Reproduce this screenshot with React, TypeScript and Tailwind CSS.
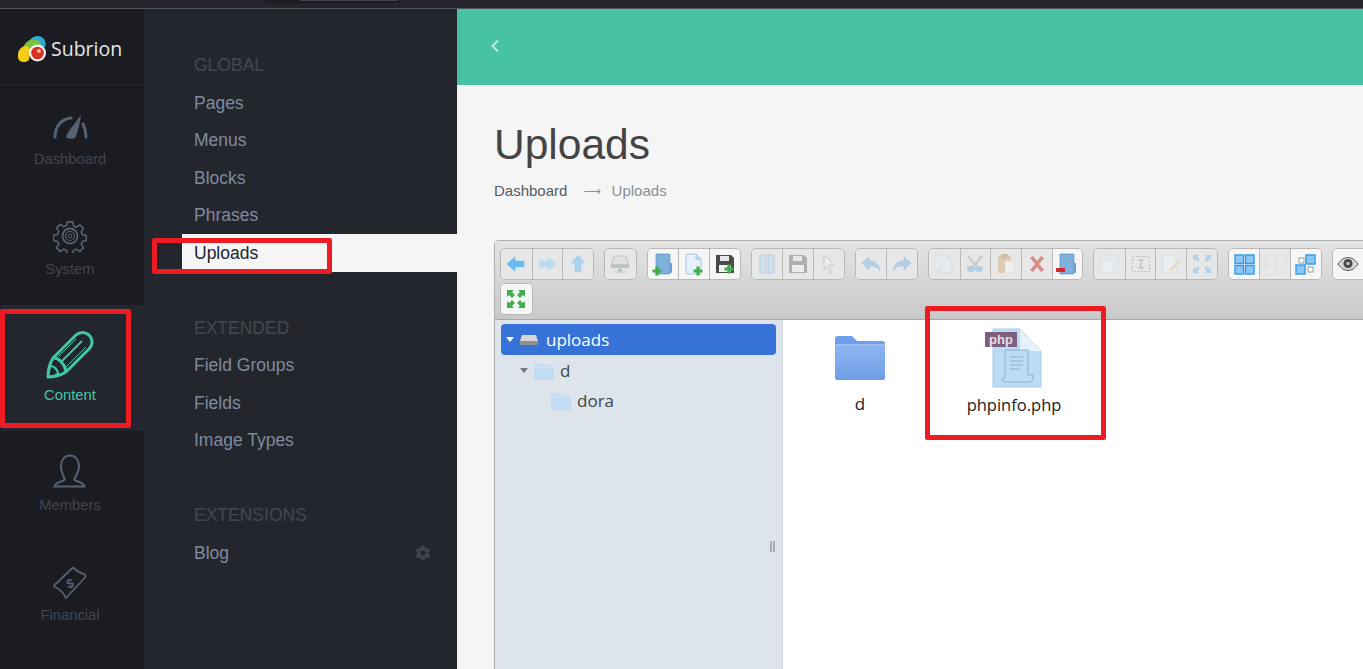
import React from 'react';

const sans = { fontFamily: '"Liberation Sans", Arial, sans-serif' };

const BLUE = '#68bbf0';

const Arrow = ({ rot = 0, fill = BLUE }: { rot?: number; fill?: string }) => (
  <svg width="20" height="20" viewBox="0 0 20 20" style={{ transform: `rotate(${rot}deg)` }}>
    <path d="M1 10 L9 3 V7 H18 V13 H9 V17 Z" fill={fill} stroke={fill} strokeWidth="0.6" />
  </svg>
);

const Plus = ({ x, y, fill = '#3fae4a' }: { x: number; y: number; fill?: string }) => (
  <path d={`M${x - 1.6} ${y - 4.5}h3.2v2.9h2.9v3.2h-2.9v2.9h-3.2v-2.9h-2.9v-3.2h2.9z`} fill={fill} />
);

const Drive = () => (
  <svg width="22" height="22" viewBox="0 0 22 22">
    <path d="M5 3h12l3 9H2z" fill="#dcdcdc" stroke="#9a9a9a" strokeWidth="0.7" />
    <rect x="2" y="11" width="18" height="4" rx="1" fill="#a9a9a9" />
    <path d="M11 15v3M5 19h12" stroke="#a4a4a4" strokeWidth="1" />
    <path d="M8 16h6l-3 3.5z" fill="#6cc06c" />
  </svg>
);

const FolderOpen = ({ badge }: { badge?: 'plus' | 'minus' }) => (
  <svg width="22" height="24" viewBox="0 0 22 24">
    <path d="M4 2h13a1 1 0 0 1 1 1v18a1 1 0 0 1-1 1H4z" fill="#7fb0dc" stroke="#5b92c4" strokeWidth="0.7" />
    <path d="M18 11h2v9a1 1 0 0 1-1 1h-1z" fill="#6a9fd0" />
    {badge === 'plus' && <Plus x={5} y={19} />}
    {badge === 'minus' && <rect x="0" y="16" width="9" height="4" fill="#d22a2a" />}
  </svg>
);

const FileNew = () => (
  <svg width="22" height="24" viewBox="0 0 22 24">
    <path d="M3 2h10l5 5v15H3z" fill="#e4f0fa" stroke="#9bbedb" strokeWidth="0.8" />
    <path d="M13 2v5h5" fill="#c5dcef" stroke="#9bbedb" strokeWidth="0.8" />
    <Plus x={15} y={19} />
  </svg>
);

const Save = ({ dark }: { dark?: boolean }) => (
  <svg width="20" height="20" viewBox="0 0 20 20">
    <path d="M1 1h15l3 3v15H1z" fill={dark ? '#4a4a4a' : '#8b8b8b'} />
    <rect x="5" y="2" width="9" height="5" fill="#e8e8e8" />
    <rect x="4" y="11" width="12" height="7" fill="#f2f2f2" />
    {dark && <Plus x={14} y={15} />}
  </svg>
);

const Book = () => (
  <svg width="20" height="22" viewBox="0 0 20 22">
    <path d="M3 2h6v18H3zM11 2h6v18h-6z" fill="#c4dcf0" stroke="#8fb6d6" strokeWidth="0.8" />
  </svg>
);

const Pointer = () => (
  <svg width="18" height="20" viewBox="0 0 18 20">
    <path d="M4 1l10 10h-5l3 7-2 1-3-7-3 3z" fill="#f2f2f2" stroke="#a8a8a8" strokeWidth="0.8" />
  </svg>
);

const Undo = ({ flip }: { flip?: boolean }) => (
  <svg width="20" height="18" viewBox="0 0 20 18" style={{ transform: flip ? 'scaleX(-1)' : undefined }}>
    <path d="M1 8l7-6v4c6 0 10 3 11 10-2-4-6-5-11-5v4z" fill="#8fc0e8" stroke="#6ea6d2" strokeWidth="0.5" />
  </svg>
);

const Copy = () => (
  <svg width="20" height="22" viewBox="0 0 20 22">
    <path d="M2 2h9l3 3v12H2z" fill="#edf4fa" stroke="#c8d8e4" strokeWidth="0.8" />
    <path d="M6 6h9l3 3v11H6z" fill="#e6eff7" stroke="#c0d2e0" strokeWidth="0.8" />
  </svg>
);

const Cut = () => (
  <svg width="20" height="20" viewBox="0 0 20 20">
    <path d="M3 2l9 11M17 2L8 13" stroke="#b9b9b9" strokeWidth="2.4" />
    <ellipse cx="6" cy="15" rx="4" ry="3" fill="#8cc0e8" />
    <ellipse cx="14" cy="15" rx="4" ry="3" fill="#8cc0e8" />
  </svg>
);

const Paste = () => (
  <svg width="20" height="22" viewBox="0 0 20 22">
    <rect x="2" y="3" width="13" height="17" rx="1" fill="#d9b88f" />
    <rect x="5" y="1" width="7" height="4" fill="#bfa27e" />
    <path d="M9 8h6l3 3v9H9z" fill="#f6f6f6" stroke="#d4d4d4" strokeWidth="0.6" />
  </svg>
);

const Cross = () => (
  <svg width="18" height="18" viewBox="0 0 18 18">
    <path d="M2 3l3-2 4 5 4-5 3 2-5 6 5 6-3 2-4-5-4 5-3-2 5-6z" fill="#d98a8a" />
  </svg>
);

const Duplicate = () => (
  <svg width="20" height="22" viewBox="0 0 20 22">
    <path d="M6 2h9l3 3v10H6z" fill="#e8eff6" stroke="#cfdbe5" strokeWidth="0.8" />
    <path d="M2 7h12v13H2z" fill="#edf3f8" stroke="#cfdbe5" strokeWidth="0.8" />
  </svg>
);

const Rename = () => (
  <svg width="20" height="20" viewBox="0 0 20 20">
    <rect x="1.5" y="2.5" width="17" height="15" fill="none" stroke="#a4a4a4" strokeDasharray="2 1.5" />
    <path d="M7 6h6M10 6v8M7 14h6" stroke="#9d9d9d" strokeWidth="1" />
  </svg>
);

const EditFile = () => (
  <svg width="20" height="22" viewBox="0 0 20 22">
    <path d="M2 2h10l3 3v15H2z" fill="#eef3f7" stroke="#cfd8df" strokeWidth="0.8" />
    <path d="M9 16l8-8 1.5 1.5-8 8-2.5 1z" fill="#e8c89a" />
  </svg>
);

const Resize = () => (
  <svg width="20" height="20" viewBox="0 0 20 20" fill="#8cc4ea">
    <path d="M1 1h6L5 3l3 3-2 2-3-3-2 2zM19 1v6l-2-2-3 3-2-2 3-3-2-2zM1 19v-6l2 2 3-3 2 2-3 3 2 2zM19 19h-6l2-2-3-3 2-2 3 3 2-2z" />
  </svg>
);

const Tiles = ({ on }: { on: boolean }) => (
  <svg width="21" height="21" viewBox="0 0 21 21">
    {[1, 11.5].map((x) =>
      [1, 11.5].map((y) => (
        <rect key={`${x}-${y}`} x={x} y={y} width="8.5" height="8.5" fill={on ? '#8cc8f5' : '#ededed'} stroke={on ? '#2e9bea' : '#e2e2e2'} strokeWidth="1.4" />
      )),
    )}
  </svg>
);

const Mixed = () => (
  <svg width="21" height="21" viewBox="0 0 21 21">
    <rect x="11" y="1" width="9" height="9" fill="#8cc8f5" stroke="#2e9bea" strokeWidth="1.4" />
    <rect x="1" y="11" width="9" height="9" fill="#8cc8f5" stroke="#2e9bea" strokeWidth="1.4" />
    <rect x="4" y="4" width="5" height="5" fill="#fff" stroke="#999" />
    <rect x="13" y="13" width="5" height="5" fill="#fff" stroke="#999" />
  </svg>
);

const Eye = () => (
  <svg width="22" height="16" viewBox="0 0 22 16">
    <path d="M1 8c3-4.500 6.500-6.500 10-6.500S18 3.500 21 8c-3 4.500-6.500 6.500-10 6.500S4 12.500 1 8z" fill="#d6d6d6" stroke="#555" strokeWidth="1" />
    <circle cx="11" cy="7.500" r="4.500" fill="#4a4a4a" />
    <circle cx="11" cy="7.500" r="1.800" fill="#bdbdbd" />
  </svg>
);

const Fullscreen = () => (
  <svg width="20" height="20" viewBox="0 0 20 20" fill="#45ad52">
    <path d="M1 1h7L6 3l3 3-3 3-3-3-2 2zM19 1v7l-2-2-3 3-3-3 3-3-2-2zM1 19v-7l2 2 3-3 3 3-3 3 2 2zM19 19h-7l2-2-3-3 3-3 3 3 2-2z" />
  </svg>
);

type Tool = { icon: React.ReactNode; on?: boolean; fade?: boolean };

const toolGroups: Tool[][] = [
  [{ icon: <Arrow /> }, { icon: <Arrow rot={180} fill="#bcdcf2" /> }, { icon: <Arrow rot={90} fill="#a9d3ef" /> }],
  [{ icon: <Drive />, fade: true }],
  [{ icon: <FolderOpen badge="plus" />, on: true }, { icon: <FileNew />, on: true }, { icon: <Save dark />, on: true }],
  [{ icon: <Book />, fade: true }, { icon: <Save />, fade: true }, { icon: <Pointer />, fade: true }],
  [{ icon: <Undo />, fade: true }, { icon: <Undo flip />, fade: true }],
  [{ icon: <Copy />, fade: true }, { icon: <Cut />, fade: true }, { icon: <Paste />, fade: true }, { icon: <Cross /> }, { icon: <FolderOpen badge="minus" />, on: true }],
  [{ icon: <Duplicate />, fade: true }, { icon: <Rename />, fade: true }, { icon: <EditFile />, fade: true }, { icon: <Resize />, fade: true }],
  [{ icon: <Tiles on />, on: true }, { icon: <Tiles on={false} />, fade: true }, { icon: <Mixed />, on: true }],
  [{ icon: <Eye />, on: true }, { icon: null, on: true }, { icon: null, on: true }],
];

const ToolGroup = ({ tools }: { tools: Tool[] }) => (
  <div className="flex h-[32px] shrink-0 overflow-hidden rounded-[5px] border border-[#b8b8b8]">
    {tools.map((t, i) => (
      <div
        key={i}
        className={`flex w-[30.67px] items-center justify-center border-l border-[#b8b8b8] first:border-l-0 ${t.on ? 'bg-[#f6f6f6]' : 'bg-[#e7e7e7]'}`}
      >
        <div className={t.fade ? 'flex opacity-60' : 'flex'}>{t.icon}</div>
      </div>
    ))}
  </div>
);

const SmallFolder = () => (
  <svg width="22" height="20" viewBox="0 0 22 20">
    <path d="M1 3a1 1 0 0 1 1-1h6l2 2h10a1 1 0 0 1 1 1v13a1 1 0 0 1-1 1H2a1 1 0 0 1-1-1z" fill="#c3dcf6" />
    <path d="M1 6h20" stroke="#d8e8f9" strokeWidth="1" />
  </svg>
);

const Logo = () => (
  <svg width="30" height="28" viewBox="0 0 30 28">
    <path d="M11 7C13 1 21-1 25 3c3 3 3 7 2 9L14 16z" fill="#31a9d6" />
    <path d="M5 13C7 6 13 3 19 5c3 1 4 3 4 6L10 21z" fill="#79c043" />
    <path d="M0 23c-1-6 2-11 7-12 4 0 5 2 5 5l-1 9c-3 3-10 3-11-2z" fill="#f5cd18" />
    <circle cx="19.500" cy="18" r="8.500" fill="#f5f5f5" />
    <circle cx="19.500" cy="18" r="6.300" fill="#d8321f" />
    <circle cx="21" cy="16" r="2" fill="#f3b9a9" />
  </svg>
);

const iconStroke = '#566272';

const railItems = [
  {
    label: 'Dashboard',
    gap: 'mb-[10px]',
    icon: (
      <svg width="36" height="26" viewBox="0 0 36 26" fill="none" stroke={iconStroke} strokeWidth="3" strokeLinecap="round">
        <path d="M3 24C3 14 9 6 19 5" />
        <path d="M31 11c2 4 3 8 3 13" />
        <path d="M14 24c0-3 9-14 15-22-1 9-4 20-6 23-2 1-8 1-9-1z" fill={iconStroke} stroke="none" />
      </svg>
    ),
  },
  {
    label: 'System',
    gap: 'mb-[6px]',
    icon: (
      <svg width="34" height="34" viewBox="0 0 34 34" fill="none" stroke={iconStroke} strokeWidth="1.800">
        <path d="M14 1.500h6l1 4.500 3 1.300 4-2.500 4 4-2.500 4 1.300 3 4.500 1v0l-.3 5.500-4.200 1-1.300 3 2.500 4-4 4-4-2.500-3 1.300-1 4.500h-6l-1-4.500-3-1.300-4 2.500-4-4 2.500-4-1.300-3-4.500-1v-6l4.500-1 1.300-3-2.500-4 4-4 4 2.500 3-1.300z" transform="translate(1.700 1.500) scale(0.9)" />
        <circle cx="17" cy="17" r="7.500" />
        <circle cx="17" cy="17" r="4.500" strokeWidth="1.200" />
        <circle cx="17" cy="17" r="1.800" strokeWidth="1" />
      </svg>
    ),
  },
  {
    label: 'Content',
    gap: 'mb-[5px]',
    active: true,
    icon: (
      <svg width="50" height="50" viewBox="0 0 50 50" fill="none" stroke="#41c7a4" strokeWidth="3" strokeLinejoin="round">
        <path d="M3 47c0-7 2-14 5-19L31 5c4-3 9-3 13 0 4 4 4 10 0 14L21 42c-5 3-11 5-18 5z" />
        <path d="M8 28c5-1 12 6 13 14" />
        <path d="M3 47c0-4 1-8 3-11 3 0 7 4 7 8-3 2-6 3-10 3z" strokeWidth="2.200" />
        <path d="M17 31L37 11" strokeWidth="2" />
        <path d="M13 27L31 9M21 37L41 17" strokeWidth="1" />
      </svg>
    ),
  },
  {
    label: 'Members',
    gap: 'mb-[7px]',
    icon: (
      <svg width="34" height="34" viewBox="0 0 34 34" fill="none" stroke={iconStroke} strokeWidth="2">
        <path d="M17 1.500c6 0 9 5 9 11 0 5-3 9-4.500 12-.5 1 0 2 2 2.500 3 .8 7 2 8 5.500H1.500c1-3.500 5-4.700 8-5.500 2-.5 2.500-1.500 2-2.500C10 21.500 8 17.500 8 12.500c0-6 3-11 9-11z" />
      </svg>
    ),
  },
  {
    label: 'Financial',
    gap: 'mb-[5px]',
    icon: (
      <svg width="34" height="34" viewBox="0 0 34 34" fill="none" stroke={iconStroke} strokeWidth="1.800" strokeLinejoin="round">
        <path d="M1.500 19L20 1.500c2 2 5 5 12 7 .8 1 .8 2 0 3L13 32c-2-4-6-9-11.500-11-.4-.5-.4-1.400 0-2z" />
        <text x="17" y="22" textAnchor="middle" fontSize="13" fontFamily="Liberation Sans" fill={iconStroke} stroke="none" fontWeight="700" transform="rotate(-20 17 17)">$</text>
      </svg>
    ),
  },
];

const navGroups = [
  { title: 'GLOBAL', items: ['Pages', 'Menus', 'Blocks', 'Phrases', 'Uploads'] },
  { title: 'EXTENDED', items: ['Field Groups', 'Fields', 'Image Types'] },
  { title: 'EXTENSIONS', items: ['Blog'] },
];

const NavGear = () => (
  <svg width="18" height="18" viewBox="0 0 24 24" fill="#3f434d">
    <path d="M19.400 13c.1-.3.100-.7.100-1s0-.7-.1-1l2.100-1.600c.2-.2.200-.4.100-.6l-2-3.500c-.1-.2-.4-.3-.6-.2l-2.500 1c-.5-.4-1.100-.7-1.700-1l-.4-2.600c0-.3-.2-.4-.5-.4h-4c-.2 0-.5.100-.5.400l-.4 2.600c-.6.300-1.100.6-1.700 1l-2.500-1c-.2-.1-.5 0-.6.200l-2 3.500c-.1.200-.1.500.1.600L4.500 11c0 .3-.1.700-.1 1s0 .7.100 1l-2.100 1.600c-.2.200-.2.400-.1.600l2 3.500c.1.200.4.300.6.200l2.500-1c.5.400 1.100.7 1.700 1l.4 2.600c0 .3.300.4.500.4h4c.3 0 .5-.1.500-.4l.4-2.600c.6-.3 1.200-.6 1.700-1l2.500 1c.2.100.5 0 .6-.2l2-3.500c.1-.2.100-.5-.1-.6zM12 15.500a3.500 3.500 0 1 1 0-7 3.500 3.500 0 0 1 0 7z" />
  </svg>
);

const App: React.FC = () => {
  return (
    <div className="relative flex h-screen flex-col overflow-hidden bg-[#f5f5f5]" style={sans}>
      <div className="flex h-[9px] shrink-0 border-b border-[#55545e] bg-[#25242c]">
        <div className="ml-[265px] h-[3px] w-[135px] rounded-b-[4px] bg-[#1b1b21] pl-[35px]">
          <div className="h-[1px] w-[98px] bg-[#44444c]" />
        </div>
      </div>

      <div className="flex min-h-0 flex-1">
        <aside className="flex w-[144px] shrink-0 flex-col bg-[#1a1c22]">
          <div className="flex h-[76px] items-center gap-[3px] border-b border-[#24262c] pl-[18px] pt-[5px]">
            <Logo />
            <span className="text-[19.500px] leading-none text-[#e6e6e6]" style={{ fontFamily: '"Open Sans", sans-serif' }}>
              Subrion
            </span>
          </div>
          {railItems.map((item) => (
            <div
              key={item.label}
              className={`flex flex-col items-center justify-end pb-[26px] pr-[4px] ${item.active ? 'h-[126px] bg-[#23262e]' : 'h-[110px]'}`}
            >
              <div className={item.gap}>{item.icon}</div>
              <span className={`text-[14.800px] leading-[20px] ${item.active ? 'text-[#41c7a4]' : 'text-[#414650]'}`}>
                {item.label}
              </span>
            </div>
          ))}
        </aside>

        <nav className="w-[313px] shrink-0 bg-[#24262e] pt-[37.500px]">
          {navGroups.map((group) => (
            <div key={group.title} className="mb-[37.500px]">
              <div className="flex h-[37.500px] items-center pl-[50px] text-[17.500px] text-[#444852]">{group.title}</div>
              {group.items.map((name) =>
                name === 'Uploads' ? (
                  <div key={name} className="ml-[38px] flex h-[37.500px] items-center bg-[#f5f5f5] pl-[12px] text-[17.500px] text-[#1d2230]">
                    {name}
                  </div>
                ) : (
                  <div key={name} className="flex h-[37.500px] items-center justify-between pl-[50px] pr-[25px] text-[17.500px] text-[#7f8a9e]">
                    {name}
                    {name === 'Blog' && <NavGear />}
                  </div>
                ),
              )}
            </div>
          ))}
        </nav>

        <main className="flex min-w-0 flex-1 flex-col overflow-hidden">
          <div className="flex h-[76px] shrink-0 items-center bg-[#48c2a5] pl-[33px] pb-[3px]">
            <svg width="10" height="14" viewBox="0 0 10 14" fill="none" stroke="#b7e9dc" strokeWidth="2">
              <path d="M8 1.500L2.500 7 8 12.500" />
            </svg>
          </div>

          <div className="flex min-h-0 flex-1 flex-col pl-[37px]">
            <h1 className="mt-[35px] text-[42.500px] leading-[50px] font-normal text-[#444444]">Uploads</h1>
            <div className="mt-[9px] flex h-[24px] items-center text-[15px] text-[#555b63]">
              <span>Dashboard</span>
              <span className="ml-[16px] mr-[11px] text-[12px] text-[#8a8f96]" style={{ fontFamily: '"DejaVu Sans", sans-serif' }}>⟶</span>
              <span className="text-[#8b8f95]">Uploads</span>
            </div>

            <div className="mt-[37px] flex min-h-0 w-[1000px] flex-1 flex-col rounded-t-[5px] border border-b-0 border-[#b0b0b0]">
              <div className="flex h-[79px] shrink-0 flex-col gap-[3px] rounded-t-[4px] border-b border-[#a8a8a8] bg-gradient-to-b from-[#e4e4e4] to-[#c9c9c9] pl-[5px] pt-[7px]">
                <div className="flex gap-[10px]">
                  {toolGroups.map((tools, i) => (
                    <ToolGroup key={i} tools={tools} />
                  ))}
                </div>
                <div className="flex">
                  <ToolGroup tools={[{ icon: <Fullscreen />, on: true }]} />
                </div>
              </div>

              <div className="flex min-h-0 flex-1">
                <div className="flex w-[288px] shrink-0 flex-col items-stretch border-r border-[#d4d9df] bg-[#dde4ec] px-[6px] pt-[4px]" style={{ fontFamily: '"Open Sans", sans-serif' }}>
                  <div className="flex h-[31px] items-center rounded-[4px] bg-[#3672d8] pl-[5px] text-[17px] text-white">
                    <span className="mr-[5px] h-0 w-0 border-x-[4.500px] border-t-[5px] border-x-transparent border-t-white" />
                    <svg width="20" height="14" viewBox="0 0 20 14" className="mr-[7px]">
                      <path d="M3 2h14l2 6v4H1V8z" fill="#d6d6d6" />
                      <rect x="1" y="8" width="18" height="4" fill="#8f8f8f" />
                    </svg>
                    uploads
                  </div>
                  <div className="flex h-[31px] items-center pl-[19px] text-[17px] text-[#444444]">
                    <span className="mr-[5px] h-0 w-0 border-x-[4.500px] border-t-[5px] border-x-transparent border-t-[#777777]" />
                    <SmallFolder />
                    <span className="ml-[5px]">d</span>
                  </div>
                  <div className="flex h-[30px] items-center pl-[49px] text-[17px] text-[#444444]">
                    <SmallFolder />
                    <span className="ml-[5px]">dora</span>
                  </div>
                  <div className="mt-[125px] flex justify-end pr-[1px]">
                    <div className="h-[11px] w-[5px] border-x-2 border-[#a6acb2]" />
                  </div>
                </div>

                <div className="flex flex-1 gap-[60px] bg-white pl-[30px] pt-[8px]" style={{ fontFamily: '"Open Sans", sans-serif' }}>
                  <div className="flex w-[94px] flex-col items-center">
                    <svg width="52" height="50" viewBox="0 0 52 50" className="mt-[6px]">
                      <defs>
                        <linearGradient id="bigFolder" x1="0" y1="0" x2="0" y2="1">
                          <stop offset="0" stopColor="#8fb6f2" />
                          <stop offset="1" stopColor="#6f9fe6" />
                        </linearGradient>
                      </defs>
                      <path d="M1 5a3 3 0 0 1 3-3h14l5 5h25a3 3 0 0 1 3 3v33a3 3 0 0 1-3 3H4a3 3 0 0 1-3-3z" fill="#6f9fec" />
                      <path d="M1 11h50v32a3 3 0 0 1-3 3H4a3 3 0 0 1-3-3z" fill="url(#bigFolder)" />
                      <path d="M1 10.500h50" stroke="#a3c4f5" strokeWidth="1" />
                    </svg>
                    <span className="mt-[7px] text-[17px] text-[#222222]">d</span>
                  </div>
                  <div className="flex w-[94px] flex-col items-center">
                    <svg width="58" height="60" viewBox="0 0 58 60" className="ml-[-1px]">
                      <path d="M8 1h27l21 22v36H8z" fill="#bcdcf6" stroke="#a5cdec" />
                      <path d="M35 1v22h21z" fill="#e6f2fb" />
                      <path d="M20 22h23v25h5v3a4 4 0 0 1-4 4H21a4 4 0 0 1-4-4h3z" fill="#bcdcf6" stroke="#8eb0cf" strokeWidth="1" />
                      <path d="M25 29h13M25 33h13M25 37h13M25 41h9" stroke="#8eb0cf" strokeWidth="1" />
                      <path d="M0 4h32v15H0z" fill="#7e5f80" />
                      <text x="16" y="15.500" textAnchor="middle" fontSize="13" fontWeight="700" fontFamily="Liberation Sans" fill="#e6dfe8">php</text>
                    </svg>
                    <span className="mt-[5px] text-[16.500px] whitespace-nowrap text-[#222222]">phpinfo.php</span>
                  </div>
                </div>
              </div>
            </div>
          </div>
        </main>
      </div>

      {/* red markup drawn over the screenshot */}
      <div className="absolute left-[152px] top-[238px] h-[36px] w-[180px] rounded-[2px] border-[5px] border-[#ed1c24]" />
      <div className="absolute left-0 top-[309px] h-[119px] w-[131px] rounded-[2px] border-[5px] border-[#ed1c24]" />
      <div className="absolute left-[925px] top-[306px] h-[134px] w-[181px] rounded-[2px] border-[5px] border-[#ed1c24]" />
    </div>
  );
};

export default App;
